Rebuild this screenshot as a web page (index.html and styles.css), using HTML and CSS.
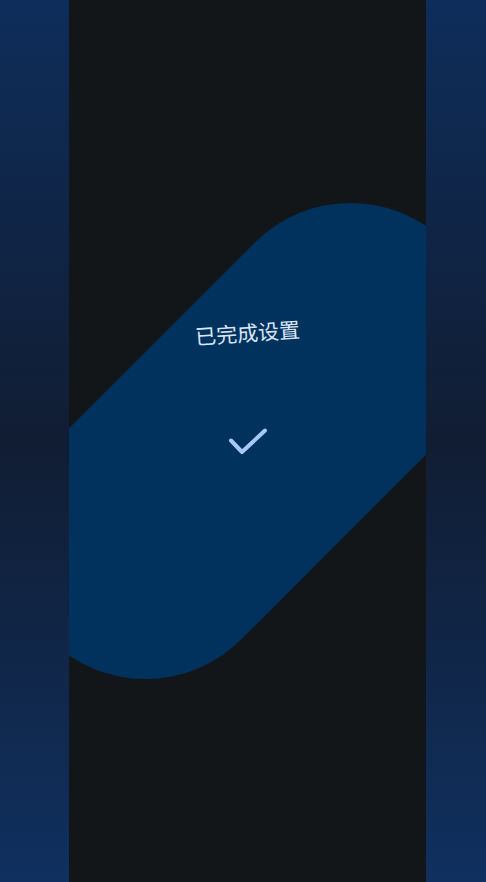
FILE: index.html
```html
<!DOCTYPE html>
<html lang="zh-CN">
<head>
    <meta charset="UTF-8">
    <meta name="viewport" content="width=device-width, initial-scale=1.0">
    <title>已完成设置</title>
    <link rel="stylesheet" href="styles.css">
</head>
<body>
    <div class="side side-left"></div>
    <main class="setup-screen">
        <div class="blob"></div>
        <div class="setup-content">
            <p class="done-text">已完成设置</p>
            <svg class="done-check" width="42" height="32" viewBox="0 0 42 32" fill="none">
                <path d="M4 14.5 L15 26 L38 4.5" stroke="#a8c7ff" stroke-width="4" stroke-linecap="round" stroke-linejoin="round"/>
            </svg>
        </div>
    </main>
    <div class="side side-right"></div>
</body>
</html>
```

FILE: styles.css
```css
body {
    margin: 0;
    height: 100vh;
    display: flex;
    background-color: #131619;
    font-family: "Noto Sans CJK SC", "Noto Sans", sans-serif;
    overflow: hidden;
}

.side {
    background: linear-gradient(#0e2d5a, #111d33 50%, #10305f);
}

.side-left {
    width: 69px;
}

.side-right {
    width: 60px;
}

.setup-screen {
    flex: 1;
    position: relative;
    overflow: hidden;
    background-color: #131619;
}

.blob {
    position: absolute;
    left: 50%;
    top: 50%;
    width: 561px;
    height: 271px;
    border-radius: 136px;
    background-color: #00325e;
    transform: translate(-50%, -50%) rotate(-45deg);
}

.setup-content {
    position: relative;
    display: flex;
    flex-direction: column;
    align-items: center;
    padding-top: 318px;
}

.done-text {
    margin: 0;
    font-size: 21px;
    line-height: 28px;
    color: #dce5f7;
    transform: rotate(-4deg);
}

.done-check {
    margin-top: 80px;
}
```
